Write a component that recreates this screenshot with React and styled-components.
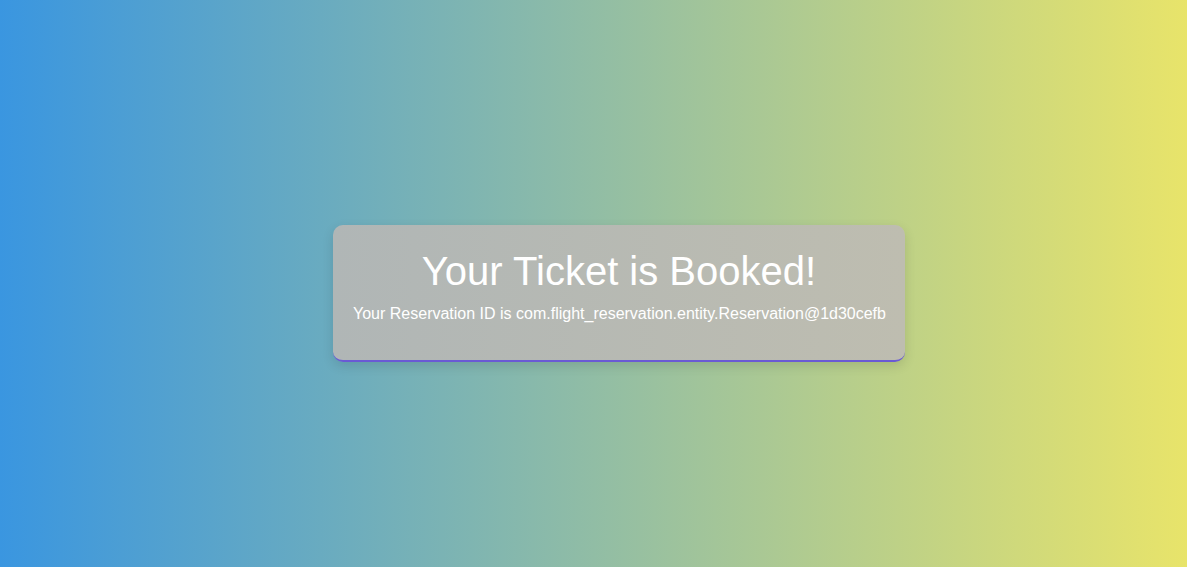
import React from 'react';
import styled, { createGlobalStyle } from 'styled-components';

const GlobalStyle = createGlobalStyle`
  html, body {
    margin: 0;
    padding: 0;
    height: 100%;
  }
  body {
    font-family: "Liberation Sans", Arial, sans-serif;
    background: linear-gradient(to right, #3a96e0, #e8e46a);
  }
`;

const Page = styled.main`
  min-height: 100vh;
  display: flex;
  align-items: center;
  justify-content: center;
  padding: 19px 0 0 51px;
  box-sizing: border-box;
`;

const Card = styled.section`
  width: 572px;
  box-sizing: border-box;
  padding: 24px 20px 17px;
  border-radius: 10px;
  border-bottom: 2px solid #6a5ad4;
  background: linear-gradient(to right, #b0b6b6, #bebdb0);
  box-shadow: 0 4px 12px rgba(0, 0, 0, 0.12);
  text-align: center;
  color: #fff;
`;

const Title = styled.h1`
  margin: 0 0 11px;
  font-size: 40px;
  font-weight: 400;
`;

const Message = styled.p`
  margin: 0 0 20px;
  font-size: 16px;
  white-space: nowrap;
`;

const App = () => {
  const reservationId = 'com.flight_reservation.entity.Reservation@1d30cefb';

  return (
    <>
      <GlobalStyle />
      <Page>
        <Card>
          <Title>Your Ticket is Booked!</Title>
          <Message>Your Reservation ID is {reservationId}</Message>
        </Card>
      </Page>
    </>
  );
};

export default App;
